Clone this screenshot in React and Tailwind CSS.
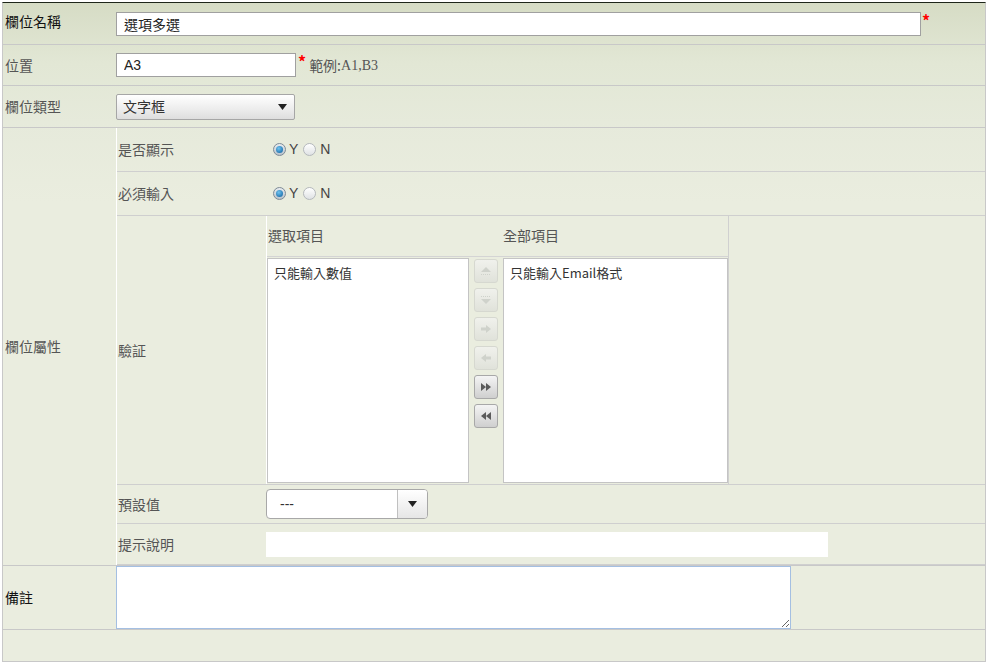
const font = { fontFamily: '"Noto Sans CJK TC", "Noto Sans", sans-serif' };

function Radio({ checked }) {
  return (
    <span
      className={`inline-flex h-[13px] w-[13px] items-center justify-center rounded-full border ${
        checked ? "border-[#7d8a96] bg-[linear-gradient(180deg,#e8ecf0,#b9c3cc)]" : "border-[#b4b8bc] bg-[linear-gradient(180deg,#ffffff,#dfe2e4)]"
      }`}
    >
      {checked && <span className="h-[7px] w-[7px] rounded-full bg-[radial-gradient(circle_at_40%_35%,#6fc3f0,#0a5d9c)]" />}
    </span>
  );
}

function YesNo() {
  return (
    <div className="flex items-center pl-[7px] font-['Liberation_Sans',sans-serif] text-[14px] text-[#444]">
      <Radio checked />
      <span className="ml-[3px]">Y</span>
      <span className="ml-[5px] flex"><Radio /></span>
      <span className="ml-[4px]">N</span>
    </div>
  );
}

function ArrowBtn({ enabled, children }) {
  return (
    <div
      className={`flex h-[24px] w-[24px] items-center justify-center rounded-[3px] border ${
        enabled
          ? "border-[#a8a8a8] bg-[linear-gradient(180deg,#f4f4f4,#cfcfcf)]"
          : "border-[#d6d8d0] bg-[linear-gradient(180deg,#f0f1ec,#e0e2da)]"
      }`}
    >
      {children}
    </div>
  );
}

export default function App() {
  const dim = "#cfd2cb";
  const dark = "#5a5a5a";
  return (
    <div className="h-[662px] w-[986px] bg-white pt-[2px]" style={font}>
      <div className="ml-[2px] flex h-[660px] w-[984px] flex-col border-x border-b border-t border-x-[#c8c8c8] border-b-[#c8c8c8] border-t-[#1e261a] bg-[linear-gradient(180deg,#d6dcc5_0px,#e2e7d5_60px,#e6eadb_120px,#eaeddf_200px)] text-[14px]">
        {/* 欄位名稱 */}
        <div className="flex h-[42px] items-center border-b border-[#c8c8c8]">
          <div className="mb-[4px] w-[113px] pl-[2px] text-[#111]">欄位名稱</div>
          <input
            readOnly
            value="選項多選"
            className="h-[24px] w-[805px] border border-[#a0a0a0] bg-white px-[7px] text-[14px] text-[#222] outline-none"
          />
          <span className="mb-[8px] ml-[1px] text-[16px] font-bold leading-none text-[#ff0000]">*</span>
        </div>

        {/* 位置 */}
        <div className="flex h-[41px] items-center border-b border-[#c8c8c8]">
          <div className="w-[113px] pl-[2px] text-[#555]">位置</div>
          <input
            readOnly
            value="A3"
            className="h-[24px] w-[180px] border border-[#a0a0a0] bg-white px-[7px] font-['Liberation_Sans',sans-serif] text-[14px] text-[#222] outline-none"
          />
          <span className="mb-[8px] ml-[2px] text-[16px] font-bold leading-none text-[#ff0000]">*</span>
          <span className="ml-[3px] text-[#555]">範例:</span>
          <span className="font-['Liberation_Serif',serif] text-[14px] text-[#555]">A1,B3</span>
        </div>

        {/* 欄位類型 */}
        <div className="flex h-[42px] items-center border-b border-[#c8c8c8]">
          <div className="w-[113px] pl-[2px] text-[#555]">欄位類型</div>
          <div className="flex h-[26px] w-[179px] items-center justify-between rounded-[2px] border border-[#a6a6a6] bg-[linear-gradient(180deg,#ffffff,#ececec_60%,#dedede)] pl-[6px] pr-[7px] text-[#333]">
            <span>文字框</span>
            <svg width="9" height="6" viewBox="0 0 9 6">
              <path d="M0 0h9L4.5 6z" fill="#222" />
            </svg>
          </div>
        </div>

        {/* 欄位屬性 */}
        <div className="flex h-[438px] border-b border-[#c8c8c8]">
          <div className="flex w-[113px] items-center pl-[2px] text-[#555]">欄位屬性</div>
          <div className="flex flex-1 flex-col border-l border-white">
            <div className="flex h-[44px] items-center border-b border-[#cfcfcf]">
              <div className="w-[149px] pl-[1px] text-[#555]">是否顯示</div>
              <YesNo />
            </div>
            <div className="flex h-[44px] items-center border-b border-[#cfcfcf]">
              <div className="w-[149px] pl-[1px] text-[#555]">必須輸入</div>
              <YesNo />
            </div>

            {/* 驗証 */}
            <div className="flex h-[270px] border-b border-[#cfcfcf]">
              <div className="flex w-[149px] items-center pl-[1px] text-[#555]">驗証</div>
              <div className="flex w-[463px] flex-col border-l border-r border-l-white border-r-[#d0d0d0]">
                <div className="flex h-[41px] items-center border-b border-[#d4d4d4] text-[#555]">
                  <span className="w-[236px] pl-[1px]">選取項目</span>
                  <span>全部項目</span>
                </div>
                <div className="flex pt-[1px] text-[13px]">
                  <div className="h-[225px] w-[203px] border border-[#c4c4c4] bg-white px-[6px] pt-[4px] text-[#333]">
                    只能輸入數值
                  </div>
                  <div className="flex w-[34px] flex-col items-center gap-[5px] pt-[1px]">
                    <ArrowBtn>
                      <svg width="12" height="10" viewBox="0 0 12 10">
                        <path d="M6 1l5 5H1z" fill={dim} />
                        <path d="M1 8.5h10" stroke={dim} strokeDasharray="1 1" />
                      </svg>
                    </ArrowBtn>
                    <ArrowBtn>
                      <svg width="12" height="10" viewBox="0 0 12 10">
                        <path d="M1 1.5h10" stroke={dim} strokeDasharray="1 1" />
                        <path d="M1 4h10L6 9z" fill={dim} />
                      </svg>
                    </ArrowBtn>
                    <ArrowBtn>
                      <svg width="12" height="10" viewBox="0 0 12 10">
                        <path d="M1 3.5h5V1l5 4-5 4V6.5H1z" fill={dim} />
                      </svg>
                    </ArrowBtn>
                    <ArrowBtn>
                      <svg width="12" height="10" viewBox="0 0 12 10">
                        <path d="M11 3.5H6V1L1 5l5 4V6.5h5z" fill={dim} />
                      </svg>
                    </ArrowBtn>
                    <ArrowBtn enabled>
                      <svg width="12" height="10" viewBox="0 0 12 10">
                        <path d="M1 1l5 4-5 4zM6 1l5 4-5 4z" fill={dark} />
                      </svg>
                    </ArrowBtn>
                    <ArrowBtn enabled>
                      <svg width="12" height="10" viewBox="0 0 12 10">
                        <path d="M11 1L6 5l5 4zM6 1L1 5l5 4z" fill={dark} />
                      </svg>
                    </ArrowBtn>
                  </div>
                  <div className="h-[225px] w-[226px] border border-[#c4c4c4] bg-white px-[6px] pt-[4px] text-[#333]">
                    只能輸入Email格式
                  </div>
                </div>
              </div>
            </div>

            {/* 預設值 */}
            <div className="flex h-[39px] items-center border-b border-[#cfcfcf]">
              <div className="w-[149px] pl-[1px] text-[#555]">預設值</div>
              <div className="flex h-[30px] w-[162px] overflow-hidden rounded-[4px] border border-[#a8a8a8] bg-white">
                <div className="flex flex-1 items-center pl-[13px] font-['Liberation_Sans',sans-serif] text-[#333]">---</div>
                <div className="flex w-[30px] items-center justify-center border-l border-[#c0c0c0] bg-[linear-gradient(180deg,#ffffff,#e6e6e6)]">
                  <svg width="9" height="6" viewBox="0 0 9 6">
                    <path d="M0 0h9L4.5 6z" fill="#222" />
                  </svg>
                </div>
              </div>
            </div>

            {/* 提示說明 */}
            <div className="flex h-[41px] items-center border-b border-[#cfcfcf]">
              <div className="w-[149px] pl-[1px] text-[#555]">提示說明</div>
              <div className="h-[25px] w-[562px] bg-white" />
            </div>
          </div>
        </div>

        {/* 備註 */}
        <div className="flex h-[64px] border-b border-[#c8c8c8]">
          <div className="flex w-[113px] items-center pl-[2px] text-[#111]">備註</div>
          <textarea
            readOnly
            className="h-[63px] w-[675px] border border-[#a4bfe2] bg-white outline-none"
          />
        </div>

        <div className="flex-1" />
      </div>
    </div>
  );
}
